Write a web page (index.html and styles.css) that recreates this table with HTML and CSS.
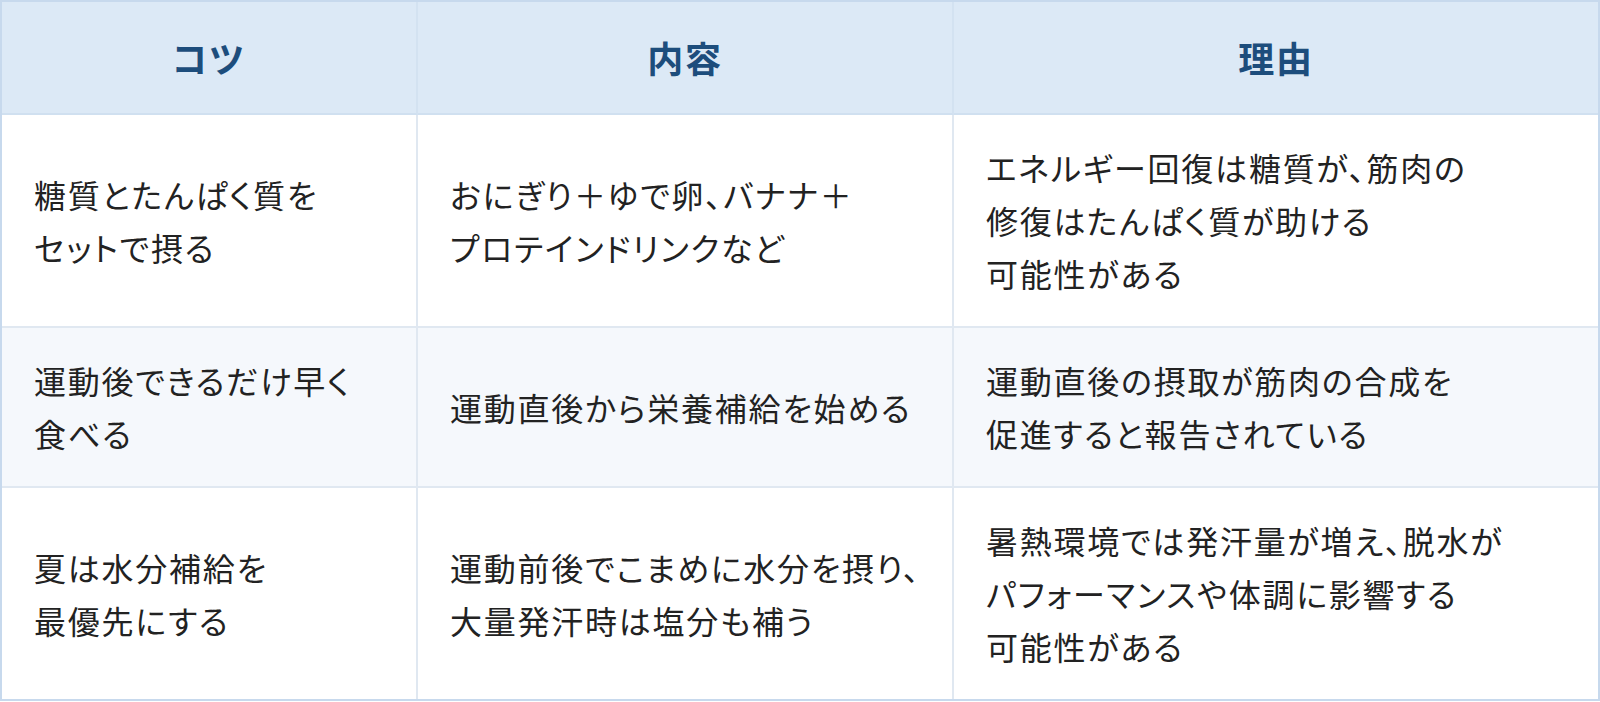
FILE: index.html
```html
<!DOCTYPE html>
<html lang="ja">
<head>
<meta charset="utf-8">
<title>運動後の栄養補給のコツ</title>
<link rel="stylesheet" href="styles.css">
</head>
<body>
<div class="frame">
  <table class="tips">
    <colgroup>
      <col class="col-tip">
      <col class="col-content">
      <col class="col-reason">
    </colgroup>
    <thead>
      <tr>
        <th>コツ</th>
        <th>内容</th>
        <th>理由</th>
      </tr>
    </thead>
    <tbody>
      <tr>
        <td>糖質とたんぱく質を<br>セットで摂る</td>
        <td>おにぎり＋ゆで卵、バナナ＋<br>プロテインドリンクなど</td>
        <td>エネルギー回復は糖質が、筋肉の<br>修復はたんぱく質が助ける<br>可能性がある</td>
      </tr>
      <tr class="alt">
        <td>運動後できるだけ早く<br>食べる</td>
        <td>運動直後から栄養補給を始める</td>
        <td>運動直後の摂取が筋肉の合成を<br>促進すると報告されている</td>
      </tr>
      <tr>
        <td>夏は水分補給を<br>最優先にする</td>
        <td>運動前後でこまめに水分を摂り、<br>大量発汗時は塩分も補う</td>
        <td>暑熱環境では発汗量が増え、脱水が<br>パフォーマンスや体調に影響する<br>可能性がある</td>
      </tr>
    </tbody>
  </table>
</div>
</body>
</html>
```

FILE: styles.css
```css
html, body {
  margin: 0;
  padding: 0;
  background: #ffffff;
}

body {
  font-family: "Noto Sans CJK JP", "Noto Sans", sans-serif;
  color: #222222;
}

.frame {
  width: 1600px;
  box-sizing: border-box;
  border: 2px solid #c7d9ed;
}

.tips {
  width: 100%;
  border-collapse: separate;
  border-spacing: 0;
  table-layout: fixed;
  font-feature-settings: "palt";
  letter-spacing: 0.11em;
}

.col-tip { width: 416px; }
.col-content { width: 536px; }
.col-reason { width: auto; }

.tips th {
  background: #dce9f6;
  color: #1d4d7c;
  font-size: 36px;
  font-weight: 700;
  line-height: 53px;
  padding: 29px 32px;
  text-align: center;
  border-right: 2px solid #d3e2f1;
  border-bottom: 2px solid #d0e0f0;
}

.tips td {
  font-size: 32px;
  line-height: 53px;
  padding: 26px 32px;
  text-align: left;
  vertical-align: middle;
  white-space: nowrap;
  border-right: 2px solid #e0e8f1;
  border-bottom: 2px solid #e0e8f1;
}

.tips th:last-child,
.tips td:last-child {
  border-right: none;
}

.tips tbody tr:last-child td {
  border-bottom: none;
}

.tips tr.alt td {
  background: #f5f8fc;
}
```
